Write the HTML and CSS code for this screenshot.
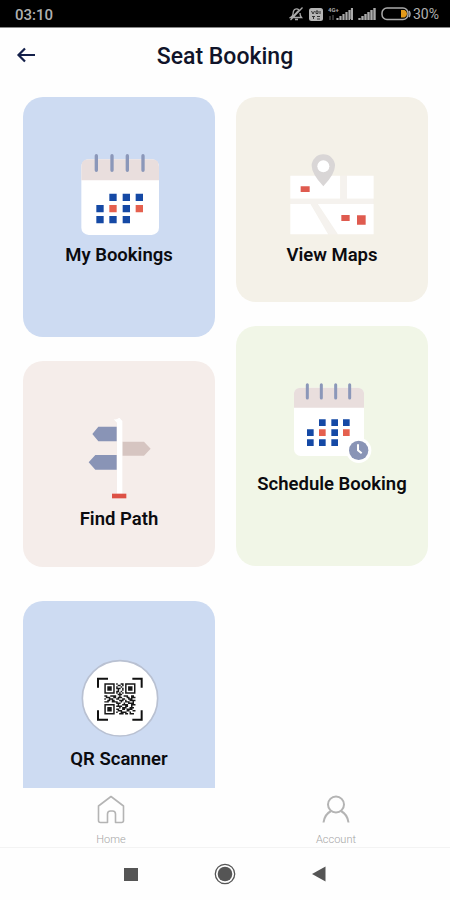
FILE: index.html
```
<!DOCTYPE html>
<html lang="en">
<head>
    <meta charset="UTF-8">
    <meta name="viewport" content="width=device-width, initial-scale=1.0">
    <title>Seat Booking</title>
    <link rel="stylesheet" href="styles.css">
</head>
<body>
    <div class="screen">
        <div class="status-bar">
            <span class="time">03:10</span>
            <div class="status-icons">
                <svg class="mute-icon" viewBox="0 0 15 14" width="15" height="14" fill="none" stroke="#aaa" stroke-width="1.3">
                    <path d="M3 10.500L10 3q-2-2-4.500-.5Q4 4 4 7q0 2-2.500 3.500h11Q11 9 11 6 M6 12.500h3 M13.500 .5L1.500 13"/>
                </svg>
                <svg class="volte-icon" viewBox="0 0 14 13" width="14" height="13">
                    <rect width="14" height="13" rx="2.500" fill="#b5b5b5"/>
                    <path d="M2.500 3l1.500 3 1.500-3 M7 3h2v2.500H7z M11 3v3 M3 8.500h3 M4.500 8.500v2.500 M8 8.500h3 M8 11h3" stroke="#333" fill="none"/>
                </svg>
                <svg class="signal-4g" viewBox="0 0 25 14" width="25" height="14">
                    <text class="network" x="0" y="5">4G+</text>
                    <path d="M2 9v4 M5 8v5" stroke="#444" stroke-width="1.5"/>
                    <path d="M9.500 11v2 M12.500 9v4 M15.500 7v6 M18.500 5v8 M21.500 3v10 M24 1v12" stroke="#aaa" stroke-width="2.200"/>
                </svg>
                <svg class="signal" viewBox="0 0 18 14" width="18" height="14">
                    <path d="M1.500 11v2 M4.500 9v4 M7.500 7v6 M10.500 5v8 M13.500 3v10 M16.500 1v12" stroke="#aaa" stroke-width="2.400"/>
                </svg>
                <svg class="battery" viewBox="0 0 30 14" width="30" height="14">
                    <rect x="1" y="1" width="26" height="11.500" rx="5" fill="none" stroke="#aaa" stroke-width="1.500"/>
                    <path d="M28 4q2 3 0 6" fill="none" stroke="#aaa" stroke-width="1.500"/>
                    <path d="M20 3h3.500q2.500 1 2.500 3.700t-2.500 3.800H20z" fill="#e39a1b"/>
                </svg>
                <span class="percent">30%</span>
            </div>
        </div>

        <header class="header">
            <svg class="back" viewBox="0 0 20 16" width="20" height="16" fill="none" stroke="#14204a" stroke-width="2.200">
                <path d="M19 8H2.500 M9 1.500L2.500 8 9 14.500"/>
            </svg>
            <h1>Seat Booking</h1>
        </header>

        <main class="cards">
            <div class="column">
                <div class="card blue tall">
                    <svg viewBox="57 42 240 246" width="80" height="82">
                        <rect x="64" y="58" width="233" height="227" rx="22" fill="#fff"/>
                        <path d="M64 121V80q0-22 22-22h189q22 0 22 22v41z" fill="#e9dedd"/>
                        <path d="M109 47v44 M156 47v44 M202 47v44 M249 47v44" stroke="#8b97b9" stroke-width="10" stroke-linecap="round"/>
                        <path d="M148 161h22v22h-22z M188 161h22v22h-22z M227 161h22v22h-22z M109 195h22v22h-22z M188 195h22v22h-22z M109 228h22v22h-22z M148 228h22v22h-22z M188 228h22v22h-22z" fill="#1549a5"/>
                        <path d="M148 195h22v22h-22z M227 195h22v22h-22z" fill="#e5604e"/>
                    </svg>
                    <h2>My Bookings</h2>
                </div>
                <div class="card rose">
                    <svg viewBox="57 54 240 246" width="80" height="82">
                        <path d="M97 102l18-22h55v44h-55z M86 187l20-22h64v44h-64z" fill="#8994b6"/>
                        <path d="M187 125h65l20 21-20 21h-65z" fill="#d6c5c1"/>
                        <path d="M171 283V68l-10-10q10 2 17-5l9 10v220z" fill="#fff"/>
                        <rect x="156" y="281" width="43" height="14" fill="#dd5145"/>
                    </svg>
                    <h2>Find Path</h2>
                </div>
                <div class="card blue tall last">
                    <svg viewBox="57 39 240 246" width="80" height="82">
                        <circle cx="180" cy="160" r="113" fill="#fff" stroke="#b9c1d2" stroke-width="5"/>
                        <path d="M114 128v-27h30 M217 101h28v27 M245 196v28h-28 M144 224h-30v-28" fill="none" stroke="#111" stroke-width="6"/>
                        <!-- 21 x 21 modules -->
                        <g transform="translate(133 115) scale(4.450)" fill="none" stroke="#181818">
                            <path d="M.5.5h6v6h-6z M14.500.5h6v6h-6z M.5 14.500h6v6h-6z"/>
                            <path d="M2 3.500h3 M16 3.500h3 M2 17.500h3" stroke-width="3"/>
                            <path d="M8 .5h1m2 0h2 M9 1.500h2m1 0h1 M8 2.500h1m2 0h1 M8 3.500h3m1 0h1 M9 4.500h1m2 0h1 M8 5.500h2m1 0h1 M8 6.500h1m1 0h1m1 0h1 M9 7.500h3 M0 8.500h2m2 0h4m2 0h1m2 0h3m2 0h2 M1 9.500h3m2 0h2m1 0h3m3 0h2m1 0h3 M0 10.500h1m2 0h3m2 0h2m2 0h2m2 0h3 M2 11.500h2m1 0h2m3 0h3m1 0h1m2 0h4 M0 12.500h3m2 0h4m2 0h1m2 0h3m2 0h1 M8 13.500h3m2 0h1m2 0h4 M9 14.500h1m2 0h4m2 0h3 M8 15.500h4m2 0h2m2 0h1 M10 16.500h1m1 0h3m2 0h3 M8 17.500h2m2 0h2m1 0h4 M9 18.500h3m3 0h2m2 0h2 M8 19.500h1m2 0h4m2 0h1 M10 20.500h3m1 0h2m1 0h3"/>
                        </g>
                    </svg>
                    <h2>QR Scanner</h2>
                </div>
            </div>
            <div class="column">
                <div class="card cream">
                    <svg viewBox="60 42 252 246" width="84" height="82">
                        <path d="M61 107h150v69H61z M231 107h80v69h-80z M61 192h61l53 91H61z M143 192h168v91H203z" fill="#fff"/>
                        <path d="M61 176h250v16H143l60 91h-28l-53-91H61z M211 107h20v69h-20z" fill="#f5f2ee"/>
                        <path d="M160 139q-35-38-35-62a35 34 0 0 1 70 0q0 24-35 62z" fill="#d9d6d6"/>
                        <circle cx="160" cy="79" r="18" fill="#fff"/>
                        <path d="M92 139h27v17H92z M214 225h25v18h-25z M261 226h26v28h-26z" fill="#df5b4f"/>
                    </svg>
                    <h2>View Maps</h2>
                </div>
                <div class="card green tall">
                    <svg viewBox="126 39 240 246" width="80" height="82">
                        <rect x="132" y="53" width="210" height="205" rx="20" fill="#fff"/>
                        <path d="M132 113V73q0-20 20-20h170q20 0 20 20v40z" fill="#e9dedd"/>
                        <path d="M172 44v40 M214 44v40 M257 44v40 M299 44v40" stroke="#8b97b9" stroke-width="9" stroke-linecap="round"/>
                        <path d="M207 148h20v20h-20z M244 148h20v20h-20z M279 148h20v20h-20z M171 178h20v20h-20z M244 178h20v20h-20z M171 208h20v20h-20z M207 208h20v20h-20z M244 208h20v20h-20z" fill="#1549a5"/>
                        <path d="M207 178h20v20h-20z M279 178h20v20h-20z" fill="#e5604e"/>
                        <circle cx="326" cy="241" r="38" fill="#fff"/>
                        <circle cx="326" cy="241" r="29" fill="#8994b6"/>
                        <path d="M324 223v18l11 9" fill="none" stroke="#fff" stroke-width="6"/>
                    </svg>
                    <h2>Schedule Booking</h2>
                </div>
            </div>
        </main>

        <nav class="tabs">
            <a class="tab home">
                <svg viewBox="0 0 28 30" width="28" height="30" fill="none" stroke="#b4b4b4" stroke-width="1.600" stroke-linejoin="round">
                    <path d="M1.500 11L14 1.500 26.500 11v14.500q0 2-2 2h-6V19q0-3-3-3h-2q-3 0-3 3v8.500h-7q-2 0-2-2z"/>
                </svg>
                <span>Home</span>
            </a>
            <a class="tab">
                <svg viewBox="0 0 28 30" width="28" height="30" fill="none" stroke="#b4b4b4" stroke-width="2">
                    <circle cx="14" cy="9.500" r="8"/>
                    <path d="M1.500 27.500q1-8 7.500-11.500 M26.500 27.500q-1-8-7.500-11.500"/>
                </svg>
                <span>Account</span>
            </a>
        </nav>

        <div class="system-nav">
            <div class="recent"></div>
            <svg viewBox="0 0 22 22" width="22" height="22">
                <circle cx="11" cy="11" r="9.700" fill="none" stroke="#555" stroke-width="1.300"/>
                <circle cx="11" cy="11" r="7.300" fill="#555"/>
            </svg>
            <svg viewBox="0 0 14 16" width="14" height="16">
                <path d="M0 8L13.500 .5v15z" fill="#555"/>
            </svg>
        </div>
    </div>
</body>
</html>
```

FILE: styles.css
```
* {
    box-sizing: border-box;
}
body {
    margin: 0;
    font-family: Roboto, "Liberation Sans", sans-serif;
    background-color: #fefefe;
}
.screen {
    display: flex;
    flex-direction: column;
    width: 450px;
    height: 900px;
    overflow: hidden;
}
.status-bar {
    display: flex;
    justify-content: space-between;
    align-items: center;
    height: 28px;
    padding: 1px 11px 0 15px;
    background-color: #000;
    border-bottom: 1px solid #888;
    color: #b0b0b0;
}
.time {
    padding-top: 2px;
    font-size: 15px;
    font-weight: 500;
}
.status-icons {
    display: flex;
    align-items: center;
}
.volte-icon {
    margin-left: 5px;
}
.signal-4g {
    margin-left: 5px;
}
.signal {
    margin-left: 5px;
}
.battery {
    margin-left: 5px;
}
.network {
    font-size: 6px;
    font-weight: bold;
    fill: #aaa;
}
.percent {
    margin-left: 2px;
    font-size: 14px;
}
.header {
    display: flex;
    align-items: center;
    height: 69px;
    padding: 0 16px 16px;
}
.back {
    flex: none;
}
.header h1 {
    flex: 1;
    margin: 0 20px 0 0;
    padding-top: 3px;
    text-align: center;
    font-size: 23px;
    font-weight: 500;
    color: #10142a;
}
.cards {
    display: flex;
    gap: 21px;
    height: 691px;
    padding: 0 22px 0 23px;
    overflow: hidden;
}
.column {
    flex: 1;
    display: flex;
    flex-direction: column;
    gap: 24px;
}
.card {
    display: flex;
    flex-direction: column;
    align-items: center;
    flex: none;
    height: 206px;
    padding-top: 57px;
    border-radius: 20px;
}
.tall {
    height: 240px;
}
.last {
    margin-top: 10px;
}
.card svg {
    flex: none;
}
.card h2 {
    margin: 0;
    line-height: 39px;
    font-size: 18.5px;
    font-weight: 600;
    color: #0b0b0f;
    white-space: nowrap;
}
.blue {
    background-color: #cddbf2;
}
.rose {
    background-color: #f5edea;
}
.cream {
    height: 205px;
    background-color: #f4f1e8;
}
.green {
    background-color: #f1f6e7;
}
.tabs {
    display: flex;
    height: 60px;
    padding: 7px 3px 0 0;
    border-bottom: 1px solid #f3f3f3;
}
.tab {
    flex: 1;
    display: flex;
    flex-direction: column;
    align-items: center;
    font-size: 11px;
    font-weight: 300;
    color: #a5a5a5;
}
.home {
    padding-right: 3px;
}
.tab span {
    margin-top: 8px;
    line-height: 14px;
}
.system-nav {
    display: flex;
    justify-content: center;
    align-items: center;
    gap: 76px;
    height: 52px;
}
.recent {
    width: 14px;
    height: 13px;
    background-color: #555;
}
```
